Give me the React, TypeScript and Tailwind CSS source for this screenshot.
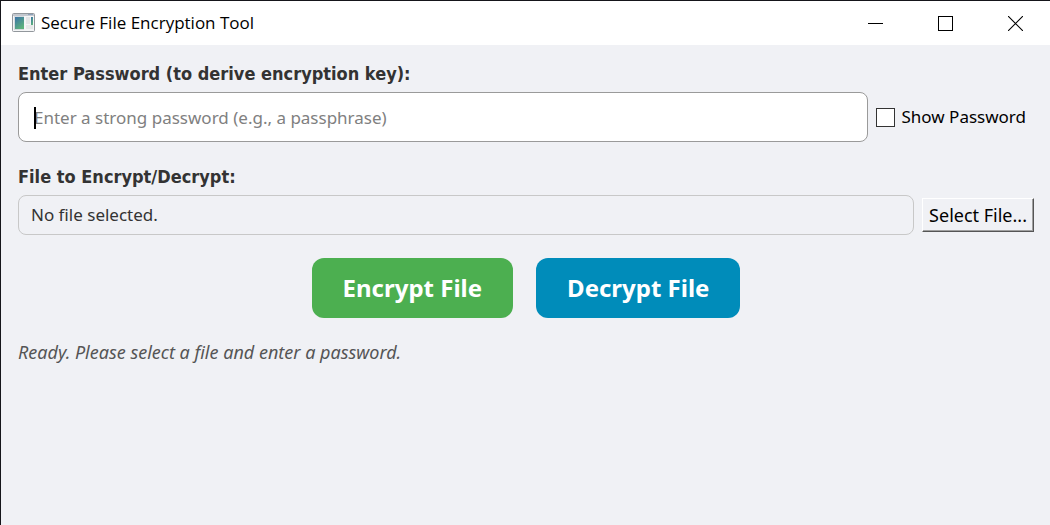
import { useState } from "react";

function AppIcon() {
  return (
    <svg width="24" height="20" viewBox="0 0 24 20" aria-hidden="true">
      <defs>
        <linearGradient id="pane" x1="0" y1="0" x2="0.6" y2="1">
          <stop offset="0" stopColor="#3a72a8" />
          <stop offset="1" stopColor="#5cb27c" />
        </linearGradient>
      </defs>
      <rect x="1.5" y="0.5" width="22" height="18" rx="1" fill="#f4f5f6" stroke="#92979c" />
      <rect x="2" y="1" width="21" height="2" fill="#c3c8cf" />
      <rect x="17" y="1" width="5" height="1" fill="#8fa3bd" />
      <rect x="3.5" y="3.5" width="9" height="13" fill="url(#pane)" stroke="#d5dade" />
      <rect x="4" y="4" width="9" height="12" fill="url(#pane)" />
      <rect x="15" y="4" width="4" height="7" fill="#e3e5e6" />
      <rect x="15" y="12" width="7" height="4" fill="#e6e8e8" />
      <rect x="20" y="4" width="2" height="8" fill="url(#pane)" />
    </svg>
  );
}

function TitleBar() {
  const control = "flex h-full w-[70px] items-center justify-center";
  return (
    <header className="flex h-11 items-center bg-white pl-[10px] text-black">
      <AppIcon />
      <h1 className="ml-[6px] flex-1 font-['Open_Sans','Noto_Sans',sans-serif] text-[17px] leading-6">
        Secure File Encryption Tool
      </h1>
      <div className="flex h-full">
        <button type="button" aria-label="Minimize" className={control}>
          <svg width="15" height="15" viewBox="0 0 15 15" shapeRendering="crispEdges">
            <rect x="0" y="7" width="15" height="1" />
          </svg>
        </button>
        <button type="button" aria-label="Maximize" className={control}>
          <svg width="15" height="15" viewBox="0 0 15 15" fill="none" stroke="#000">
            <rect x="0.5" y="0.5" width="14" height="14" />
          </svg>
        </button>
        <button type="button" aria-label="Close" className={control}>
          <svg width="15" height="15" viewBox="0 0 15 15" fill="none" stroke="#000" strokeWidth="1.1">
            <path d="M0 0L15 15M15 0L0 15" />
          </svg>
        </button>
      </div>
    </header>
  );
}

export default function App() {
  const [password, setPassword] = useState("");
  const [visible, setVisible] = useState(false);
  const heading = "font-['DejaVu_Sans_Condensed','DejaVu_Sans',sans-serif] text-lg leading-6 font-bold text-[#333]";

  return (
    <div className="flex min-h-screen flex-col border-t border-l border-[#15151a] bg-[#f0f1f5] font-['Noto_Sans','Open_Sans',sans-serif] text-[17px] leading-6 text-black">
      <TitleBar />
      <main className="flex flex-col pt-[17px] pr-4 pl-[17px]">
        <label htmlFor="password" className={heading}>
          Enter Password (to derive encryption key):
        </label>
        <div className="mt-[6px] flex items-center gap-2">
          <div className="relative flex-1">
            <input
              id="password"
              type={visible ? "text" : "password"}
              value={password}
              onChange={(e) => setPassword(e.target.value)}
              placeholder="Enter a strong password (e.g., a passphrase)"
              className="block h-[50px] w-full rounded-lg border border-[#9a9a9a] bg-white px-[15px] text-[#333] outline-none placeholder:text-[#808080]"
            />
            {password === "" && <span className="absolute top-[15px] left-4 h-[22px] w-[2px] bg-black" />}
          </div>
          <label className="flex items-center gap-[7px] pr-2">
            <input
              type="checkbox"
              checked={visible}
              onChange={(e) => setVisible(e.target.checked)}
              className="size-[19px] appearance-none border border-[#333] bg-white checked:bg-[#333]"
            />
            Show Password
          </label>
        </div>

        <h2 className={`mt-[23px] ${heading}`}>File to Encrypt/Decrypt:</h2>
        <div className="mt-[6px] flex items-center gap-2">
          <output className="flex h-10 flex-1 items-center rounded-lg border border-[#c8c8c8] px-3 text-[#333]">
            No file selected.
          </output>
          <button
            type="button"
            className="h-[34px] border border-t-white border-r-[#555] border-b-[#555] border-l-white px-[6px] text-lg shadow-[inset_-1px_-1px_0_#a0a0a0]"
          >
            Select File...
          </button>
        </div>

        <div className="mt-[23px] flex justify-center gap-[23px] text-2xl font-bold text-white">
          <button type="button" className="h-[60px] rounded-xl bg-[#4caf50] px-[31px]">
            Encrypt File
          </button>
          <button type="button" className="h-[60px] rounded-xl bg-[#008cba] px-[31px]">
            Decrypt File
          </button>
        </div>

        <p role="status" className="mt-[22px] text-lg leading-6 text-[#555] italic">
          Ready. Please select a file and enter a password.
        </p>
      </main>
    </div>
  );
}
